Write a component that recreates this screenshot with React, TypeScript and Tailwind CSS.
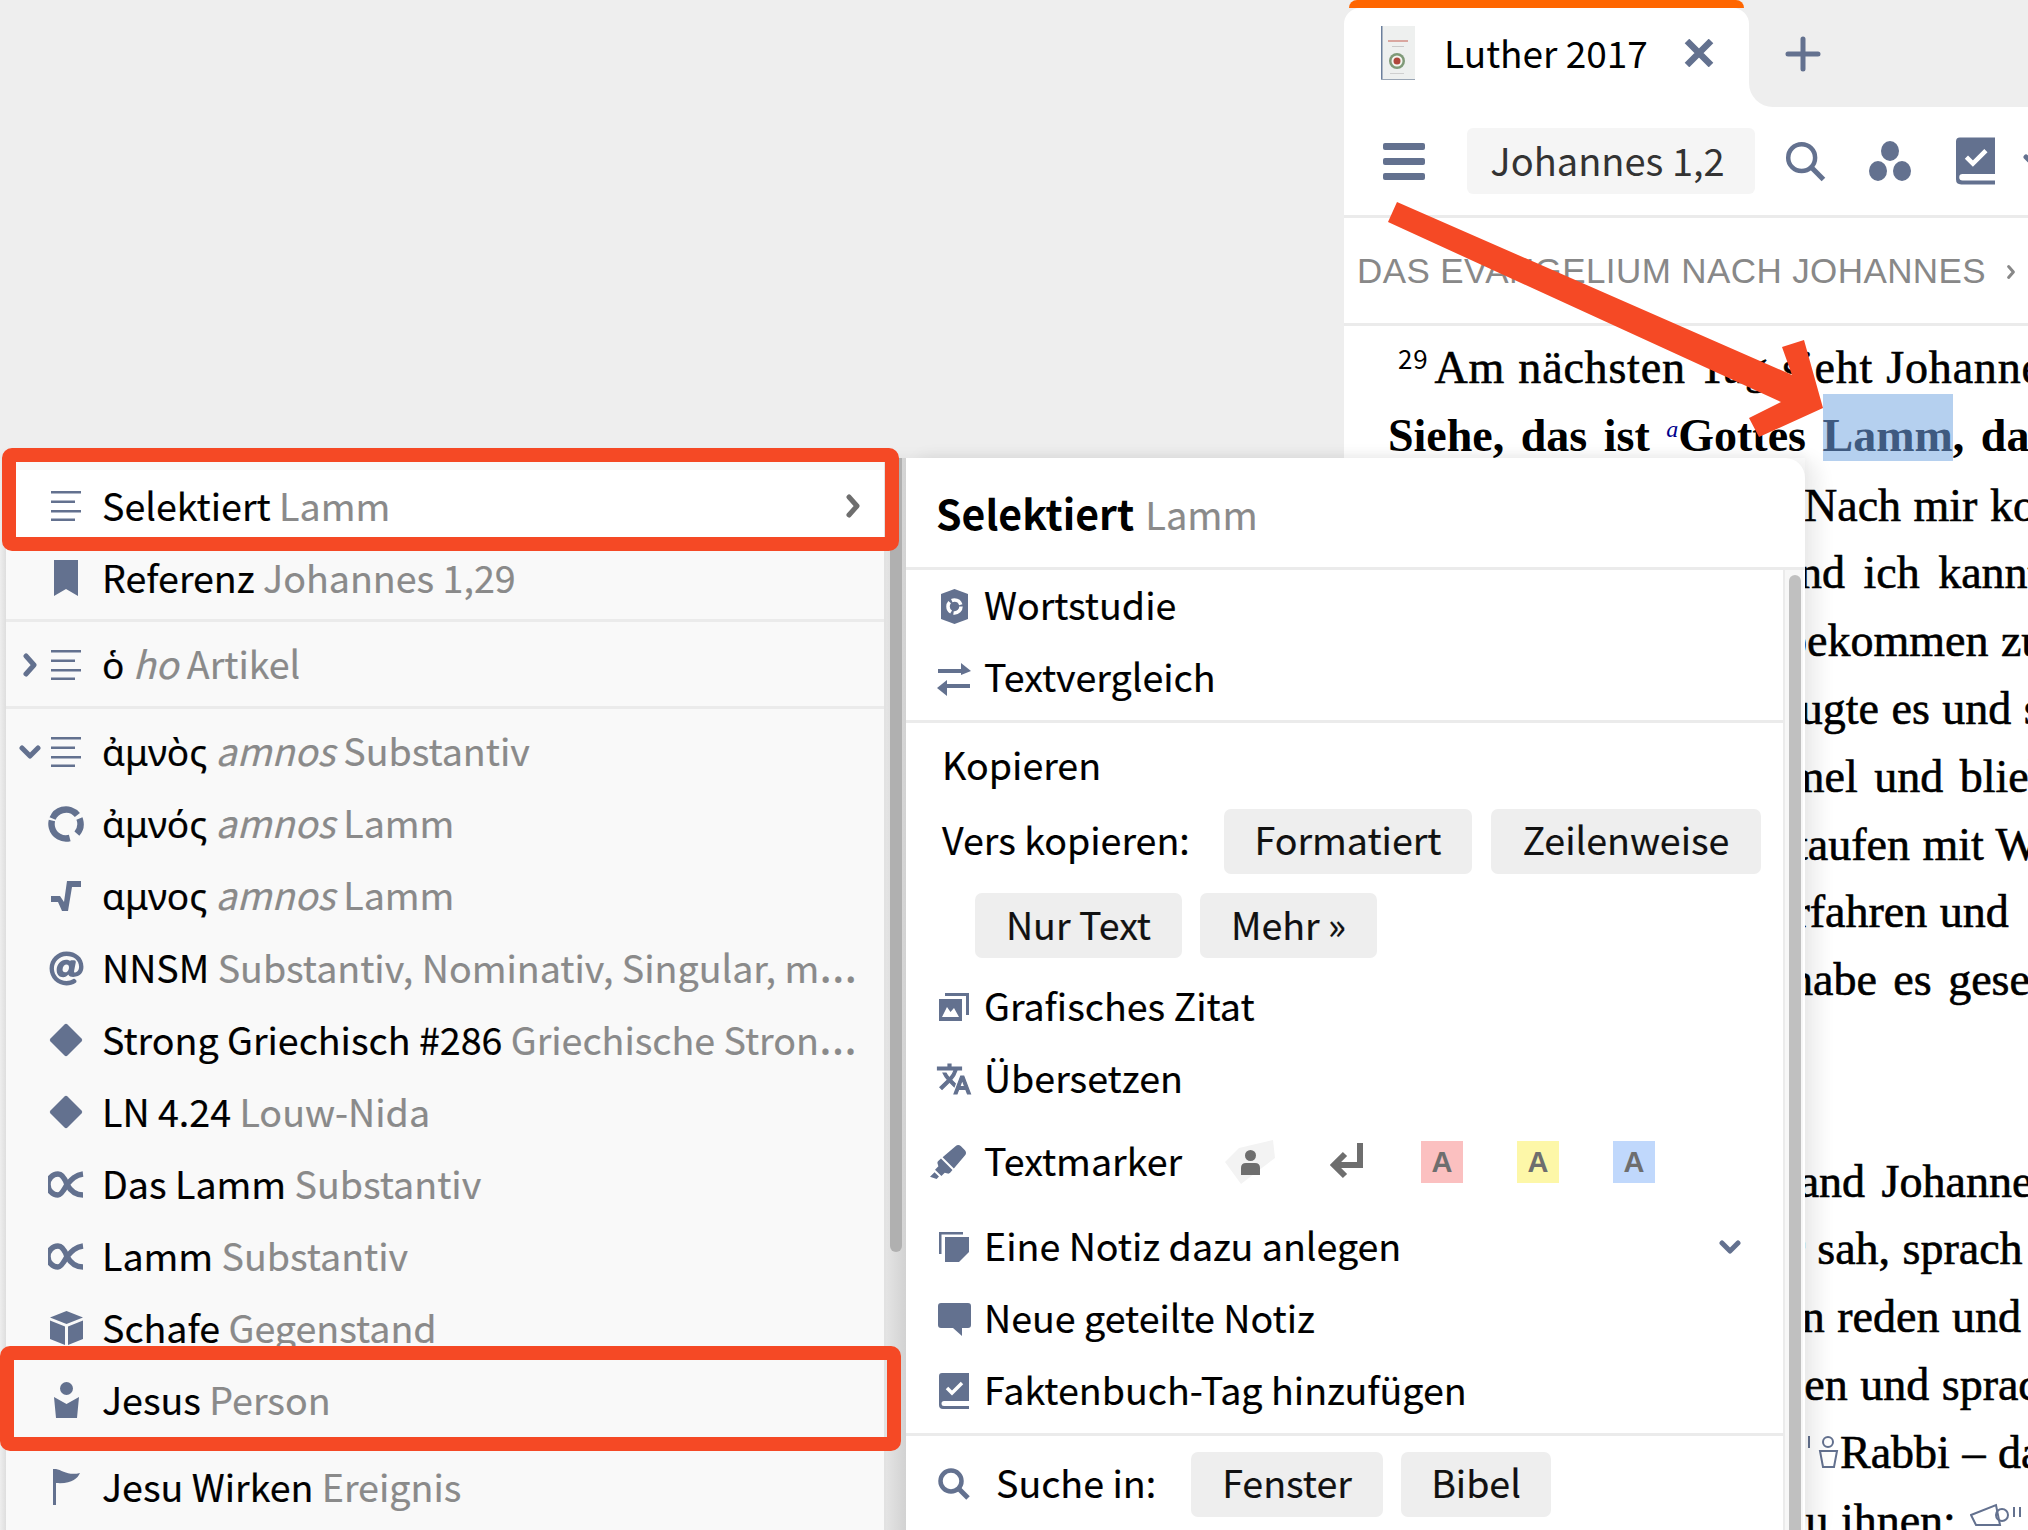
import React from 'react';
import { FaAt, FaHighlighter } from 'react-icons/fa';
import { MdTranslate } from 'react-icons/md';

const sans = "[font-family:'Noto_Sans_CJK_JP','Noto_Sans',sans-serif]";

function LinesIcon() {
  return (
    <svg width="30" height="30" viewBox="0 0 30 30" fill="currentColor">
      <rect x="0" y="0" width="30" height="2.5" />
      <rect x="0" y="9.5" width="24" height="2.5" />
      <rect x="0" y="19" width="30" height="2.5" />
      <rect x="0" y="27.5" width="24" height="2.5" />
    </svg>
  );
}

function BookmarkIcon() {
  return (
    <svg width="24" height="36" viewBox="0 0 24 36" fill="currentColor">
      <path d="M0 0H24V36L12 29L0 36Z" />
    </svg>
  );
}

function RingIcon() {
  return (
    <svg width="36" height="36" viewBox="0 0 36 36" fill="none" stroke="currentColor" strokeWidth="6.5">
      <circle cx="18" cy="18" r="14.5" strokeDasharray="30 2 30 4 16 9" transform="rotate(75 18 18)" />
    </svg>
  );
}

function RootIcon() {
  return (
    <svg width="30" height="30" viewBox="0 0 30 30" fill="currentColor">
      <path d="M0 15H9L13 21L16 0H30V6H21L17 30H11L7 21H0Z" />
    </svg>
  );
}

function DiamondIcon() {
  return (
    <svg width="34" height="34" viewBox="0 0 34 34" fill="currentColor">
      <path d="M15.5 1.5Q17 0 18.5 1.5L32.5 15.5Q34 17 32.5 18.5L18.5 32.5Q17 34 15.5 32.5L1.5 18.5Q0 17 1.5 15.5Z" />
    </svg>
  );
}

function FishIcon() {
  return (
    <svg width="36" height="27" viewBox="0 0 36 27" fill="none" stroke="currentColor" strokeWidth="5.5">
      <path d="M35 3C27 4 23 9 19 13.5C16 19 13 24 10 24A10 10.500 0 0 1 10 3C14 3 17 8 19 13.5C22 19 26 24 35 24" />
    </svg>
  );
}

function CubeIcon() {
  return (
    <svg width="33" height="34" viewBox="0 0 33 34" fill="currentColor">
      <path d="M16.500 0L33 6.500L16.500 13L0 6.500Z" />
      <path d="M0 9.500L15 15.500V34L0 28Z" />
      <path d="M33 9.500L18 15.500V34L33 28Z" />
    </svg>
  );
}

function PersonIcon() {
  return (
    <svg width="27" height="36" viewBox="0 0 27 36" fill="currentColor">
      <circle cx="13.5" cy="6.5" r="6.5" />
      <path d="M1 15L13.5 22L26 15L24 36H3Z" />
    </svg>
  );
}

function FlagIcon() {
  return (
    <svg width="27" height="36" viewBox="0 0 27 36" fill="currentColor">
      <rect x="0" y="0" width="3" height="36" />
      <path d="M3 0C9 1 15 7 27 4C24 10 19 15 3 14Z" />
    </svg>
  );
}

function ChevronRight({ className }: { className: string }) {
  return (
    <svg className={className} width="14" height="24" viewBox="0 0 14 24" fill="none" stroke="currentColor" strokeWidth="5" strokeLinecap="round" strokeLinejoin="round">
      <path d="M3 3L11 12L3 21" />
    </svg>
  );
}

function ChevronDown({ className }: { className: string }) {
  return (
    <svg className={className} width="22" height="14" viewBox="0 0 22 14" fill="none" stroke="currentColor" strokeWidth="5" strokeLinecap="round" strokeLinejoin="round">
      <path d="M3 3L11 11L19 3" />
    </svg>
  );
}

function HexIcon() {
  return (
    <svg width="27" height="35" viewBox="0 0 27 35">
      <path d="M0 5L13.500 0L27 5V30L13.500 35L0 30Z" fill="currentColor" />
      <circle cx="13.500" cy="17.500" r="6.500" fill="none" stroke="#fff" strokeWidth="3.500" strokeDasharray="11 2.500" />
    </svg>
  );
}

function SwapIcon() {
  return (
    <svg width="36" height="35" viewBox="0 0 36 35" fill="currentColor">
      <path d="M2 8H25V2L35 10L25 14V12H2Z" />
      <path d="M34 23H11V19L1 27L11 35V27H34Z" />
    </svg>
  );
}

function PictureIcon() {
  return (
    <svg width="30" height="28" viewBox="0 0 30 28" fill="currentColor">
      <path d="M6 0H30V22H27V3H6Z" />
      <path d="M0 6H23V28H0ZM3 24H20L15 15L11.500 19L8 14Z" fillRule="evenodd" />
    </svg>
  );
}

function NoteIcon() {
  return (
    <svg width="30" height="30" viewBox="0 0 30 30" fill="currentColor">
      <path d="M0 0H24V2.500H2.500V22H0Z" />
      <path d="M6 5H30V20L20 30H6Z" />
    </svg>
  );
}

function SpeechIcon() {
  return (
    <svg width="33" height="33" viewBox="0 0 33 33" fill="currentColor">
      <path d="M3 0H30Q33 0 33 3V22Q33 25 30 25H24V33L15 25H3Q0 25 0 22V3Q0 0 3 0Z" />
    </svg>
  );
}

function BookCheckIcon({ w, h }: { w: number; h: number }) {
  return (
    <svg width={w} height={h} viewBox="0 0 30 36" fill="currentColor">
      <path d="M3 0H30V28H5Q2.500 28 2.500 30.500Q2.500 33 5 33H30V36H4Q0 36 0 32V3Q0 0 3 0Z" />
      <path d="M8 15L13 20L23 10" fill="none" stroke="#fff" strokeWidth="3.500" />
    </svg>
  );
}

function SearchIcon({ size, stroke }: { size: number; stroke: number }) {
  return (
    <svg width={size} height={size} viewBox="0 0 32 32" fill="none" stroke="currentColor" strokeWidth={stroke}>
      <circle cx="13" cy="13" r="10.500" />
      <path d="M20.500 20.500L30 30" strokeWidth={stroke + 0.5} />
    </svg>
  );
}

function ReturnIcon() {
  return (
    <svg width="33" height="38" viewBox="0 0 33 38" fill="none" stroke="currentColor" strokeWidth="6">
      <path d="M30 0V22H6" />
      <path d="M15 11L4 22L15 33" />
    </svg>
  );
}

function HumanTile() {
  return (
    <div className="relative w-[50px] h-[44px] flex items-center justify-center">
      <svg className="absolute inset-0" width="50" height="44" viewBox="0 0 50 44" fill="#f3f3f3">
        <path d="M0 22L14 8L48 0L50 18L16 44Z" />
      </svg>
      <svg className="relative text-[#6e6e6e]" width="19" height="25" viewBox="0 0 19 25" fill="currentColor">
        <circle cx="9.500" cy="5.500" r="5.500" />
        <path d="M0 25V18Q0 13 5 13H14Q19 13 19 18V25Z" />
      </svg>
    </div>
  );
}

function CoverThumb() {
  return (
    <svg width="34" height="54" viewBox="0 0 34 54">
      <rect x="0" y="0" width="34" height="54" fill="#eef0ef" />
      <rect x="0" y="0" width="1.500" height="54" fill="#6b7f9c" />
      <rect x="0" y="53" width="34" height="1" fill="#9aa6b5" />
      <rect x="7" y="14" width="20" height="2" fill="#d9a7a0" />
      <rect x="11" y="20" width="12" height="1" fill="#c9c9c9" />
      <circle cx="16" cy="35" r="8" fill="#7f9a78" />
      <circle cx="16" cy="35" r="5.500" fill="#f5f5f0" />
      <circle cx="16" cy="35" r="3.500" fill="#b0473c" />
      <rect x="9" y="47" width="14" height="1" fill="#cfcfcf" />
    </svg>
  );
}

type LeftRow = {
  icon: React.ReactNode;
  main: string;
  italic?: string;
  sub: string;
  expander?: 'right' | 'down';
  selected?: boolean;
  greek?: boolean;
  cut?: boolean;
};

function MenuRow({ icon, main, italic, sub, expander, selected, greek, cut }: LeftRow) {
  return (
    <div className={`h-[72px] flex items-center ${selected ? 'bg-white' : ''}`}>
      <div className="w-[42px] shrink-0 flex justify-center pl-[6px] text-[#63718f]">
        {expander === 'right' && <ChevronRight className="" />}
        {expander === 'down' && <ChevronDown className="" />}
      </div>
      <div className="w-[36px] shrink-0 flex items-center justify-center text-[#63718f]">{icon}</div>
      <div className="ml-[18px] flex-1 min-w-0 whitespace-nowrap pb-[3px] text-black [-webkit-text-stroke:0.2px]">
        <span className={greek ? "[font-family:'Noto_Sans',sans-serif] text-[37px]" : ''}>{main}</span>{' '}
        {italic && <span className="italic text-[#8a8a8a]">{italic} </span>}
        <span className="text-[#8a8a8a]">{sub}</span>
        {cut && <span className="text-[#8a8a8a] text-[48px] leading-none [font-family:'Noto_Sans',sans-serif]">…</span>}
      </div>
      {selected && <ChevronRight className="text-[#6e6e6e] mr-[24px] shrink-0" />}
    </div>
  );
}

function Divider({ className }: { className: string }) {
  return <div className={`h-[3px] bg-[#ebebeb] ${className}`} />;
}

function ActionRow({ icon, label, tail }: { icon: React.ReactNode; label: string; tail?: React.ReactNode }) {
  return (
    <div className="h-[72px] flex items-center text-black">
      <div className="w-[36px] ml-[30px] shrink-0 flex items-center justify-center text-[#63718f]">{icon}</div>
      <div className="ml-[12px] pb-[4px] [-webkit-text-stroke:0.2px]">{label}</div>
      {tail}
    </div>
  );
}

function Chip({ label, className }: { label: string; className: string }) {
  return (
    <div className={`h-[65px] rounded-[7px] bg-[#eeeeee] flex items-center justify-center pb-[4px] text-[#111] [-webkit-text-stroke:0.2px] ${className}`}>
      {label}
    </div>
  );
}

function MarkChip({ className }: { className: string }) {
  return (
    <div className={`w-[42px] h-[42px] flex items-center justify-center text-[29px] font-bold text-[#6e6e6e] [font-family:'Liberation_Sans',sans-serif] ${className}`}>
      A
    </div>
  );
}

function LeftPanel() {
  return (
    <div className={`h-full flex ${sans} text-[37.6px] leading-[72px]`}>
      <div className="w-[6px] bg-linear-to-r from-[#eeeeee] to-[#dedede]" />
      <div className="w-[880px] bg-[#f9f9f9] border-r-2 border-[#e2e2e2] pt-[12px] overflow-hidden">
        <MenuRow selected icon={<LinesIcon />} main="Selektiert" sub="Lamm" />
        <MenuRow icon={<BookmarkIcon />} main="Referenz" sub="Johannes 1,29" />
        <Divider className="mt-[5px] mb-[7px]" />
        <MenuRow expander="right" icon={<LinesIcon />} main="ὁ" italic="ho" sub="Artikel" greek />
        <Divider className="mt-[5px] mb-[7px]" />
        <MenuRow expander="down" icon={<LinesIcon />} main="ἀμνὸς" italic="amnos" sub="Substantiv" greek />
        <MenuRow icon={<RingIcon />} main="ἀμνός" italic="amnos" sub="Lamm" greek />
        <MenuRow icon={<RootIcon />} main="αμνος" italic="amnos" sub="Lamm" greek />
        <MenuRow icon={<FaAt size={35} />} main="NNSM" sub="Substantiv, Nominativ, Singular, m" cut />
        <MenuRow icon={<DiamondIcon />} main="Strong Griechisch #286" sub="Griechische Stron" cut />
        <MenuRow icon={<DiamondIcon />} main="LN 4.24" sub="Louw-Nida" />
        <MenuRow icon={<FishIcon />} main="Das Lamm" sub="Substantiv" />
        <MenuRow icon={<FishIcon />} main="Lamm" sub="Substantiv" />
        <MenuRow icon={<CubeIcon />} main="Schafe" sub="Gegenstand" />
        <MenuRow icon={<PersonIcon />} main="Jesus" sub="Person" />
        <Divider className="mt-[5px] mb-[7px]" />
        <MenuRow icon={<FlagIcon />} main="Jesu Wirken" sub="Ereignis" />
      </div>
      <div className="w-[20px] bg-linear-to-r from-[#e4e4e4] to-[#d2d2d2]">
        <div className="ml-[4px] w-[12px] h-[794px] bg-[#b0b0b0] rounded-b-[6px]" />
      </div>
    </div>
  );
}

function MiddlePanel() {
  return (
    <div className={`w-[899px] h-full bg-white rounded-tr-[20px] shadow-[14px_0_18px_rgba(0,0,0,0.07)] flex flex-col ${sans} text-[37.6px] leading-[72px]`}>
      <div className="h-[109px] pl-[30px] pt-[18px] shrink-0 text-[41px] leading-[72px]">
        <span className="font-bold text-black">Selektiert</span> <span className="ml-[2px] text-[#8a8a8a] text-[38px] [-webkit-text-stroke:0.2px]">Lamm</span>
      </div>
      <Divider className="shrink-0" />
      <div className="flex-1 flex min-h-0">
        <div className="w-[879px] border-r-2 border-[#ebebeb]">
          <ActionRow icon={<HexIcon />} label="Wortstudie" />
          <ActionRow icon={<SwapIcon />} label="Textvergleich" />
          <Divider className="mt-[6px]" />
          <div className="h-[72px] mt-[7px] ml-[36px] pb-[4px] flex items-center text-black [-webkit-text-stroke:0.2px]">Kopieren</div>
          <div className="mt-[1px] ml-[36px] flex items-center text-black">
            <div className="w-[282px] pb-[4px] [-webkit-text-stroke:0.2px]">Vers kopieren:</div>
            <Chip label="Formatiert" className="w-[248px]" />
            <Chip label="Zeilenweise" className="w-[270px] ml-[19px]" />
          </div>
          <div className="mt-[14px] ml-[69px] flex">
            <Chip label="Nur Text" className="w-[207px]" />
            <Chip label="Mehr »" className="w-[177px] ml-[18px]" />
          </div>
          <div className="mt-[13px]">
            <ActionRow icon={<PictureIcon />} label="Grafisches Zitat" />
            <ActionRow icon={<MdTranslate size={40} className="[&>path:last-child]:stroke-current [&>path:last-child]:[stroke-width:0.8px]" />} label="Übersetzen" />
          </div>
          <div className="mt-[11px]">
            <ActionRow
              icon={<FaHighlighter size={36} className="-ml-[12px]" />}
              label="Textmarker"
              tail={
                <div className="flex items-center">
                  <div className="ml-[43px]"><HumanTile /></div>
                  <div className="ml-[55px] text-[#6e6e6e]"><ReturnIcon /></div>
                  <MarkChip className="ml-[58px] bg-[#fbc0c0]" />
                  <MarkChip className="ml-[54px] bg-[#fdf7a8]" />
                  <MarkChip className="ml-[54px] bg-[#c0d8fc]" />
                </div>
              }
            />
          </div>
          <div className="mt-[13px]">
            <ActionRow
              icon={<NoteIcon />}
              label="Eine Notiz dazu anlegen"
              tail={<ChevronDown className="ml-auto mr-[42px] text-[#63718f]" />}
            />
            <ActionRow icon={<SpeechIcon />} label="Neue geteilte Notiz" />
            <ActionRow icon={<BookCheckIcon w={30} h={36} />} label="Faktenbuch-Tag hinzufügen" />
          </div>
          <Divider className="mt-[6px]" />
          <div className="mt-[10px] flex items-center text-black">
            <div className="ml-[32px] w-[32px] text-[#63718f]"><SearchIcon size={32} stroke={4.5} /></div>
            <div className="ml-[26px] w-[195px] pb-[4px] [-webkit-text-stroke:0.2px]">Suche in:</div>
            <Chip label="Fenster" className="w-[192px]" />
            <Chip label="Bibel" className="w-[150px] ml-[18px]" />
          </div>
        </div>
        <div className="w-[18px] bg-[#f7f7f7]">
          <div className="ml-[4px] mt-[5px] w-[12px] h-full bg-[#c0c0c0] rounded-t-[6px]" />
        </div>
      </div>
    </div>
  );
}

function ReaderWindow() {
  return (
    <div className="w-[684px] h-full bg-white flex flex-col overflow-hidden">
      <div className="h-[107px] shrink-0 flex bg-[#eeeeee]">
        <div className="w-[405px] shrink-0 flex flex-col">
          <div className="h-[8px] mx-[5px] bg-[#ff6600] rounded-t-[18px]" />
          <div className={`flex-1 bg-white rounded-t-[16px] flex items-center pb-[9px] ${sans} text-[37px] text-black`}>
            <div className="ml-[37px] shrink-0"><CoverThumb /></div>
            <div className="ml-[29px] whitespace-nowrap">Luther 2017</div>
            <svg className="ml-[36px] text-[#63718f] shrink-0" width="30" height="28" viewBox="0 0 30 28" stroke="currentColor" strokeWidth="6.500">
              <path d="M3 2L27 26M27 2L3 26" />
            </svg>
          </div>
        </div>
        <div className="flex-1 bg-white">
          <div className="h-full bg-[#eeeeee] rounded-bl-[24px] flex items-start pt-[36px] pl-[36px]">
            <svg className="text-[#63718f]" width="36" height="36" viewBox="0 0 36 36" stroke="currentColor" strokeWidth="5" strokeLinecap="round">
              <path d="M18 3V33M3 18H33" />
            </svg>
          </div>
        </div>
      </div>
      <div className="h-[108px] shrink-0 flex items-center">
        <svg className="ml-[39px] text-[#63718f] shrink-0" width="42" height="37" viewBox="0 0 42 37" fill="currentColor">
          <rect x="0" y="0" width="42" height="7" rx="2" />
          <rect x="0" y="15" width="42" height="7" rx="2" />
          <rect x="0" y="30" width="42" height="7" rx="2" />
        </svg>
        <div className={`ml-[42px] w-[288px] shrink-0 h-[66px] rounded-[6px] bg-[#f5f5f5] flex items-center justify-center pb-[4px] pr-[7px] ${sans} text-[38px] text-[#333]`}>
          Johannes 1,2
        </div>
        <div className="ml-[30px] shrink-0 text-[#63718f]"><SearchIcon size={41} stroke={3.5} /></div>
        <svg className="ml-[43px] shrink-0 text-[#63718f]" width="42" height="40" viewBox="0 0 42 40" fill="currentColor">
          <ellipse cx="21" cy="10" rx="9" ry="10" />
          <ellipse cx="9" cy="30" rx="9" ry="10" />
          <ellipse cx="33" cy="30" rx="9" ry="10" />
        </svg>
        <div className="ml-[45px] shrink-0 text-[#63718f]"><BookCheckIcon w={39} h={48} /></div>
        <ChevronDown className="ml-[28px] text-[#63718f] shrink-0" />
      </div>
      <Divider className="shrink-0" />
      <div className="h-[105px] shrink-0 flex items-center pl-[13px] pt-[2px] text-[35px] tracking-[0.4px] text-[#888888] whitespace-nowrap [font-family:'Liberation_Sans',sans-serif]">
        DAS EVANGELIUM NACH JOHANNES
        <ChevronRight className="ml-[18px] scale-[0.6] shrink-0" />
      </div>
      <Divider className="shrink-0" />
      <div className="pt-[8px] text-[46px] leading-[67.8px] [word-spacing:1px] whitespace-nowrap text-black [-webkit-text-stroke:0.6px_black] [font-family:'Liberation_Serif',serif]">
        <div className="ml-[54px] tracking-[0.8px]">
          <sup className={`${sans} text-[26px] leading-none [-webkit-text-stroke:0] mr-[6px] top-[-14px]`}>29</sup>Am nächsten Tag sieht Johannes
        </div>
        <div className="ml-[44px] font-bold [-webkit-text-stroke:0] [word-spacing:5px]">
          Siehe, das ist <sup className="italic font-normal text-[24px] leading-none text-[#00008b] top-[-14px]">a</sup>Gottes{' '}
          <span className="relative inline-block">
            <span className="absolute left-0 right-0 top-[-8px] h-[67px] bg-[#b5d0ef]" />
            <span className="relative text-[#3f5a80]">Lamm</span>
          </span>
          , das
        </div>
        <div className="ml-[460px] mt-[2px]">Nach mir kommt</div>
        <div className="ml-[432px] [word-spacing:7px]">und ich kannte</div>
        <div className="ml-[440px]">bekommen zu</div>
        <div className="ml-[415px]">zeugte es und sah</div>
        <div className="ml-[363px] [word-spacing:5px]">Himmel und blieb</div>
        <div className="ml-[451px]">taufen mit Wasser</div>
        <div className="ml-[430px]">erfahren und</div>
        <div className="ml-[446px] [word-spacing:5px]">habe es gesehen</div>
        <div className="h-[133.6px]" />
        <div className="ml-[424px] [word-spacing:5px]">stand Johannes</div>
        <div className="ml-[425px]">er sah, sprach</div>
        <div className="ml-[422px]">ihn reden und</div>
        <div className="ml-[399px]">sehen und sprach</div>
        <div className="ml-[464px] flex items-center">
          <svg className="text-[#63718f] shrink-0" width="32" height="34" viewBox="0 0 32 34" fill="none" stroke="currentColor" strokeWidth="2">
            <path d="M1 0V12" />
            <circle cx="20" cy="6" r="5" />
            <path d="M12 15H29L26 31H15Z" />
          </svg>
          <span>Rabbi – das</span>
        </div>
        <div className="ml-[441px] flex items-center">
          <span>zu ihnen:</span>
          <svg className="ml-[14px] text-[#63718f] shrink-0" width="60" height="34" viewBox="0 0 60 34" fill="none" stroke="currentColor" strokeWidth="2">
            <path d="M1 12L26 2L30 22L6 22Z" />
            <circle cx="32" cy="12" r="6" />
            <path d="M44 4V14M50 4V14" />
          </svg>
        </div>
      </div>
    </div>
  );
}

function RedFrame({ className }: { className: string }) {
  return <div className={`absolute border-[14px] border-[#f54925] rounded-[10px] ${className}`} />;
}

export default function App() {
  return (
    <div className="relative w-[2028px] h-[1530px] overflow-hidden bg-[#eeeeee]">
      <div className="h-full flex justify-end">
        <ReaderWindow />
      </div>

      {/* popup menus, they lie over the reader */}
      <div className="absolute left-0 top-[458px] bottom-0 flex shadow-[0_-4px_10px_rgba(0,0,0,0.04)]">
        <LeftPanel />
        <MiddlePanel />
      </div>

      {/* annotations drawn on the screenshot */}
      <RedFrame className="left-[2px] top-[448px] w-[897px] h-[103px]" />
      <RedFrame className="left-0 top-[1346px] w-[901px] h-[105px]" />
      <svg className="absolute inset-0 pointer-events-none" width="2028" height="1530" viewBox="0 0 2028 1530" fill="#f54925">
        <polygon points="1397,202 1792,375 1782,347 1804,340 1823,408 1759,437 1749,418 1781,402 1388,222" />
      </svg>
    </div>
  );
}
